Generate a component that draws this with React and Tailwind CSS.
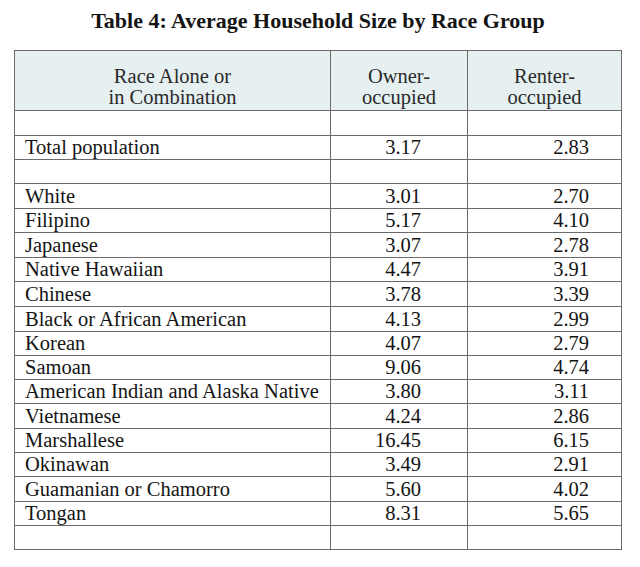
const rows = [
  { label: "", owner: "", renter: "" },
  { label: "Total population", owner: "3.17", renter: "2.83" },
  { label: "", owner: "", renter: "" },
  { label: "White", owner: "3.01", renter: "2.70" },
  { label: "Filipino", owner: "5.17", renter: "4.10" },
  { label: "Japanese", owner: "3.07", renter: "2.78" },
  { label: "Native Hawaiian", owner: "4.47", renter: "3.91" },
  { label: "Chinese", owner: "3.78", renter: "3.39" },
  { label: "Black or African American", owner: "4.13", renter: "2.99" },
  { label: "Korean", owner: "4.07", renter: "2.79" },
  { label: "Samoan", owner: "9.06", renter: "4.74" },
  { label: "American Indian and Alaska Native", owner: "3.80", renter: "3.11" },
  { label: "Vietnamese", owner: "4.24", renter: "2.86" },
  { label: "Marshallese", owner: "16.45", renter: "6.15" },
  { label: "Okinawan", owner: "3.49", renter: "2.91" },
  { label: "Guamanian or Chamorro", owner: "5.60", renter: "4.02" },
  { label: "Tongan", owner: "8.31", renter: "5.65" },
  { label: "", owner: "", renter: "" },
];

const heights = [25, 24, 24, 25, 24, 25, 24, 25, 25, 24, 24, 24, 25, 24, 24, 25, 24, 24];

export default function App() {
  return (
    <div className="w-[640px] h-[567px] bg-white text-[#141414] font-['Liberation_Serif','Times_New_Roman',serif]">
      <div className="pt-[9px] pl-[14px]">
        <div className="w-[608px] text-center text-[22px] leading-[24px] font-bold mb-[17px]">
          Table 4: Average Household Size by Race Group
        </div>
        <div className="w-[608px] border-l border-t border-[#6b6b6b] text-[20.5px]">
          <div className="flex h-[60px] bg-[#e6f0f1] text-[#2a2a2a] leading-[20.5px]">
            <div className="w-[316px] border-r border-b border-[#6b6b6b] pt-[15px] text-center">
              Race Alone or
              <br />
              in Combination
            </div>
            <div className="w-[137px] border-r border-b border-[#6b6b6b] pt-[15px] text-center">
              Owner-
              <br />
              occupied
            </div>
            <div className="w-[154px] border-r border-b border-[#6b6b6b] pt-[15px] text-center">
              Renter-
              <br />
              occupied
            </div>
          </div>
          {rows.map((r, i) => (
            <div
              key={i}
              className={`flex ${heights[i] === 25 ? "h-[25px]" : "h-[24px]"}`}
            >
              <div className="w-[316px] border-r border-b border-[#6b6b6b] pl-[10px] flex items-center whitespace-nowrap">
                {r.label}
              </div>
              <div className="w-[137px] border-r border-b border-[#6b6b6b] pr-[46px] flex items-center justify-end">
                {r.owner}
              </div>
              <div className="w-[154px] border-r border-b border-[#6b6b6b] pr-[32px] flex items-center justify-end">
                {r.renter}
              </div>
            </div>
          ))}
        </div>
      </div>
    </div>
  );
}
